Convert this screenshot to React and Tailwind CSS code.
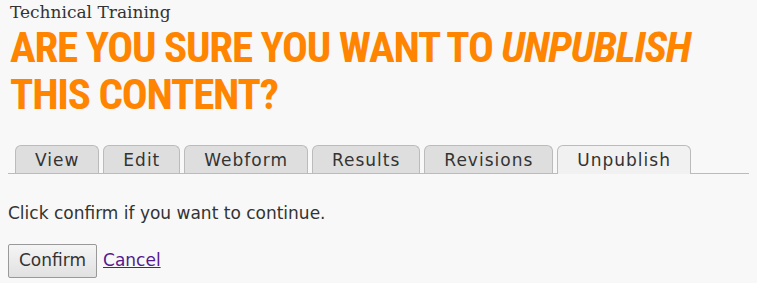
// Unpublish confirmation page

const tabs = ['View', 'Edit', 'Webform', 'Results', 'Revisions', 'Unpublish']

export default function App() {
  return (
    <div className="min-h-screen bg-[#f8f8f8] px-2 text-[#333] font-['DejaVu_Sans',sans-serif] overflow-hidden">
      {/* Header */}
      <div className="pl-[2px] text-[17px] leading-[24px] font-['DejaVu_Serif',serif] text-[#333]">
        Technical Training
      </div>
      <h1 className="pl-[2px] text-[43px] leading-[47px] font-bold uppercase tracking-[-1.2px] text-[#ff8500] font-['Roboto_Condensed','Roboto',sans-serif]">
        Are you sure you want to <em>unpublish</em> this content?
      </h1>

      {/* Tabs */}
      <ul className="mt-[27px] flex gap-[4px] pl-[7px] border-b border-[#bbb]">
        {tabs.map((t) => (
          <li key={t}>
            <span
              className={`block h-[28px] px-[19px] text-[17px] leading-[28px] tracking-[1px] border border-b-0 border-[#bbb] rounded-t-[6px] ${
                t === 'Unpublish' ? 'bg-[#f1f1f1] -mb-px h-[29px]' : 'bg-[#dedede]'
              }`}
            >
              {t}
            </span>
          </li>
        ))}
      </ul>

      <p className="mt-[27px] text-[17px] leading-[24px]">Click confirm if you want to continue.</p>

      <div className="mt-[19px] flex items-center gap-[6px]">
        <button className="h-[34px] px-[10px] text-[17px] border border-[#999] rounded-[2px] bg-gradient-to-b from-[#f5f5f5] to-[#e1e1e1] text-[#333]">
          Confirm
        </button>
        <a href="#" className="text-[17px] text-[#551a8b] underline">
          Cancel
        </a>
      </div>
    </div>
  )
}
